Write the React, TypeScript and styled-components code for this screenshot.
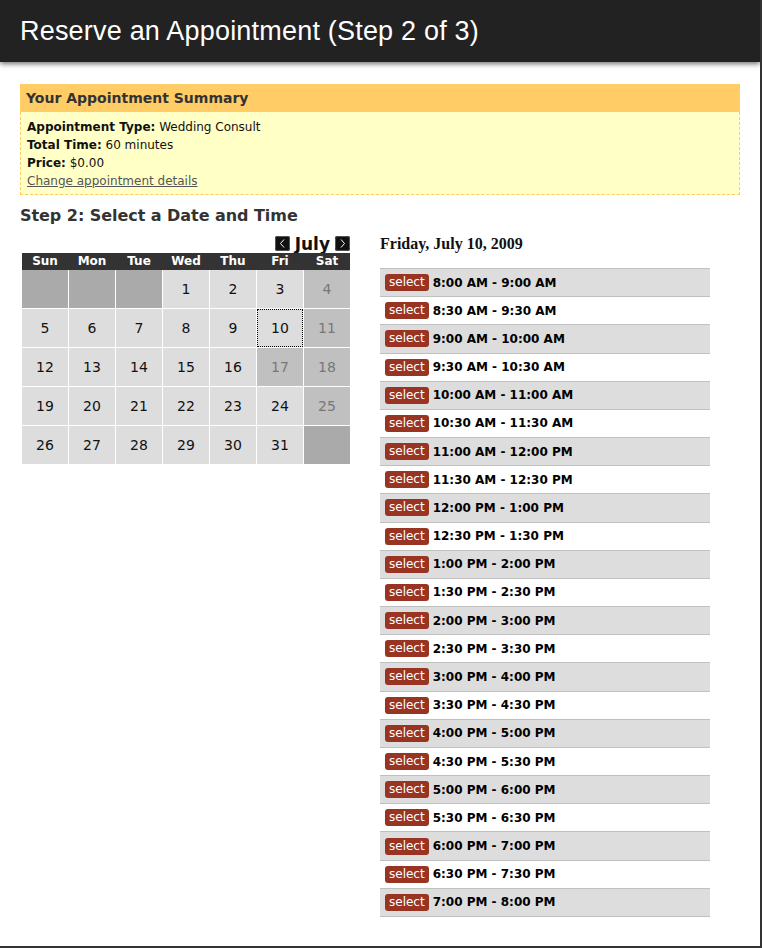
import React from "react";
import { styled, createGlobalStyle } from "styled-components";

type Slot = { label: string };

type Day = {
    n?: number;
    kind: "empty" | "open" | "closed" | "picked";
};

const GlobalStyle = createGlobalStyle`
    html, body {
        margin: 0;
        padding: 0;
        background: #fff;
    }
    body {
        font-family: "DejaVu Sans", Verdana, sans-serif;
        color: #111;
    }
`;

const times: Slot[] = [
    "8:00 AM - 9:00 AM", "8:30 AM - 9:30 AM", "9:00 AM - 10:00 AM", "9:30 AM - 10:30 AM",
    "10:00 AM - 11:00 AM", "10:30 AM - 11:30 AM", "11:00 AM - 12:00 PM", "11:30 AM - 12:30 PM",
    "12:00 PM - 1:00 PM", "12:30 PM - 1:30 PM", "1:00 PM - 2:00 PM", "1:30 PM - 2:30 PM",
    "2:00 PM - 3:00 PM", "2:30 PM - 3:30 PM", "3:00 PM - 4:00 PM", "3:30 PM - 4:30 PM",
    "4:00 PM - 5:00 PM", "4:30 PM - 5:30 PM", "5:00 PM - 6:00 PM", "5:30 PM - 6:30 PM",
    "6:00 PM - 7:00 PM", "6:30 PM - 7:30 PM", "7:00 PM - 8:00 PM",
].map((label) => ({ label }));

const weekdays = ["Sun", "Mon", "Tue", "Wed", "Thu", "Fri", "Sat"];

const closed = [4, 11, 17, 18, 25];

const buildDays = (): Day[] => {
    const days: Day[] = [{ kind: "empty" }, { kind: "empty" }, { kind: "empty" }];
    for (let n = 1; n <= 31; n++) {
        if (n === 10) days.push({ n, kind: "picked" });
        else if (closed.includes(n)) days.push({ n, kind: "closed" });
        else days.push({ n, kind: "open" });
    }
    days.push({ kind: "empty" });
    return days;
};

const NavArrow: React.FC<{ dir: "left" | "right" }> = ({ dir }) => (
    <svg width="15" height="15" viewBox="0 0 15 15">
        <rect x="0" y="0" width="15" height="15" rx="2" fill="#111" />
        <rect x="0.5" y="0.5" width="14" height="14" rx="2" fill="none" stroke="#555" />
        {dir === "left" ? (
            <path d="M9 3.5 L5.5 7.5 L9 11.5" fill="none" stroke="#fff" strokeWidth="1" />
        ) : (
            <path d="M6 3.5 L9.5 7.5 L6 11.5" fill="none" stroke="#fff" strokeWidth="1" />
        )}
    </svg>
);

const App: React.FC = () => {
    const days = buildDays();

    return (
        <StyledPage>
            <GlobalStyle />
            <TopBar>
                <h1>Reserve an Appointment (Step 2 of 3)</h1>
            </TopBar>

            <Content>
                <Summary>
                    <SummaryHead>Your Appointment Summary</SummaryHead>
                    <SummaryBody>
                        <p><b>Appointment Type:</b> Wedding Consult</p>
                        <p><b>Total Time:</b> 60 minutes</p>
                        <p><b>Price:</b> $0.00</p>
                        <p><a href="#">Change appointment details</a></p>
                    </SummaryBody>
                </Summary>

                <StepTitle>Step 2: Select a Date and Time</StepTitle>

                <Columns>
                    <CalendarColumn>
                        <MonthNav>
                            <NavArrow dir="left" />
                            <span>July</span>
                            <NavArrow dir="right" />
                        </MonthNav>
                        <Calendar>
                            <WeekHead>
                                {weekdays.map((d) => (
                                    <div key={d}>{d}</div>
                                ))}
                            </WeekHead>
                            <DayGrid>
                                {days.map((d, i) => (
                                    <DayCell key={i} $kind={d.kind}>
                                        {d.n}
                                    </DayCell>
                                ))}
                            </DayGrid>
                        </Calendar>
                    </CalendarColumn>

                    <TimesColumn>
                        <DateTitle>Friday, July 10, 2009</DateTitle>
                        <TimeList>
                            {times.map((t, i) => (
                                <TimeRow key={t.label} $shaded={i % 2 === 0}>
                                    <SelectButton>select</SelectButton>
                                    <span>{t.label}</span>
                                </TimeRow>
                            ))}
                        </TimeList>
                    </TimesColumn>
                </Columns>
            </Content>
        </StyledPage>
    );
};

const StyledPage = styled.div`
    box-sizing: border-box;
    height: 948px;
    border-right: 2px solid #333;
    border-bottom: 2px solid #333;
    overflow: hidden;
`;

const TopBar = styled.div`
    height: 62px;
    background: #222;
    box-shadow: 0 2px 5px rgba(0, 0, 0, 0.55);
    display: flex;
    align-items: center;
    padding: 0 20px;

    h1 {
        margin: 0;
        color: #fff;
        font-family: "Liberation Sans", Arial, sans-serif;
        font-weight: normal;
        font-size: 27px;
        letter-spacing: 0.2px;
    }
`;

const Content = styled.div`
    padding: 22px 20px 0 20px;
`;

const Summary = styled.div`
    width: 720px;
`;

const SummaryHead = styled.div`
    height: 28px;
    background: #ffcc66;
    color: #333;
    font-weight: bold;
    font-size: 14px;
    line-height: 29px;
    padding-left: 6px;
`;

const SummaryBody = styled.div`
    background: #ffffc6;
    border: 1px dashed #ffcc66;
    border-top: none;
    padding: 6px 6px 4px 6px;
    font-size: 12px;
    line-height: 18px;

    p {
        margin: 0;
    }

    b {
        font-weight: bold;
    }

    a {
        color: #555;
        text-decoration: underline;
    }
`;

const StepTitle = styled.h2`
    margin: 12px 0 0 0;
    font-size: 16px;
    line-height: 18px;
    color: #333;
    font-weight: bold;
    letter-spacing: -0.05px;
`;

const Columns = styled.div`
    display: flex;
    gap: 30px;
    margin-top: 10px;
`;

const CalendarColumn = styled.div`
    width: 330px;
    display: flex;
    flex-direction: column;
    align-items: flex-end;
`;

const MonthNav = styled.div`
    height: 18px;
    display: flex;
    align-items: flex-end;
    gap: 5px;

    svg {
        margin-bottom: 2px;
    }

    span {
        font-weight: bold;
        font-size: 17px;
        line-height: 17px;
        color: #111;
    }
`;

const Calendar = styled.div`
    width: 328px;
`;

const WeekHead = styled.div`
    display: grid;
    grid-template-columns: repeat(7, 46px);
    column-gap: 1px;
    background: #333;
    height: 17px;

    div {
        color: #fff;
        font-weight: bold;
        font-size: 12px;
        line-height: 17px;
        text-align: center;
    }
`;

const dayColors = {
    empty: { bg: "#aaaaaa", fg: "#111" },
    open: { bg: "#dddddd", fg: "#111" },
    closed: { bg: "#c0c0c0", fg: "#777" },
    picked: { bg: "#dddddd", fg: "#111" },
};

const DayGrid = styled.div`
    display: grid;
    grid-template-columns: repeat(7, 46px);
    grid-auto-rows: 38px;
    gap: 1px;
`;

const DayCell = styled.div<{ $kind: Day["kind"] }>`
    box-sizing: border-box;
    display: flex;
    align-items: center;
    justify-content: center;
    font-size: 14px;
    background: ${(p) => dayColors[p.$kind].bg};
    color: ${(p) => dayColors[p.$kind].fg};
    border: ${(p) => (p.$kind === "picked" ? "1px dotted #000" : "none")};
`;

const TimesColumn = styled.div`
    width: 330px;
`;

const DateTitle = styled.h3`
    margin: 0;
    font-family: "Liberation Serif", "Times New Roman", serif;
    font-size: 16px;
    line-height: 18px;
    font-weight: bold;
    color: #111;
`;

const TimeList = styled.div`
    margin-top: 15px;
    border-top: 1px solid #c0c0c0;
`;

const TimeRow = styled.div<{ $shaded: boolean }>`
    box-sizing: border-box;
    height: 28.18px;
    display: flex;
    align-items: center;
    gap: 4px;
    padding-left: 5px;
    background: ${(p) => (p.$shaded ? "#dddddd" : "#fff")};
    border-bottom: 1px solid #c0c0c0;

    span {
        font-weight: bold;
        font-size: 12px;
        color: #000;
    }
`;

const SelectButton = styled.div`
    height: 17px;
    line-height: 17px;
    padding: 0 4px;
    border-radius: 3px;
    background: #993322;
    color: #fff;
    font-size: 12px;
`;

export default App;
